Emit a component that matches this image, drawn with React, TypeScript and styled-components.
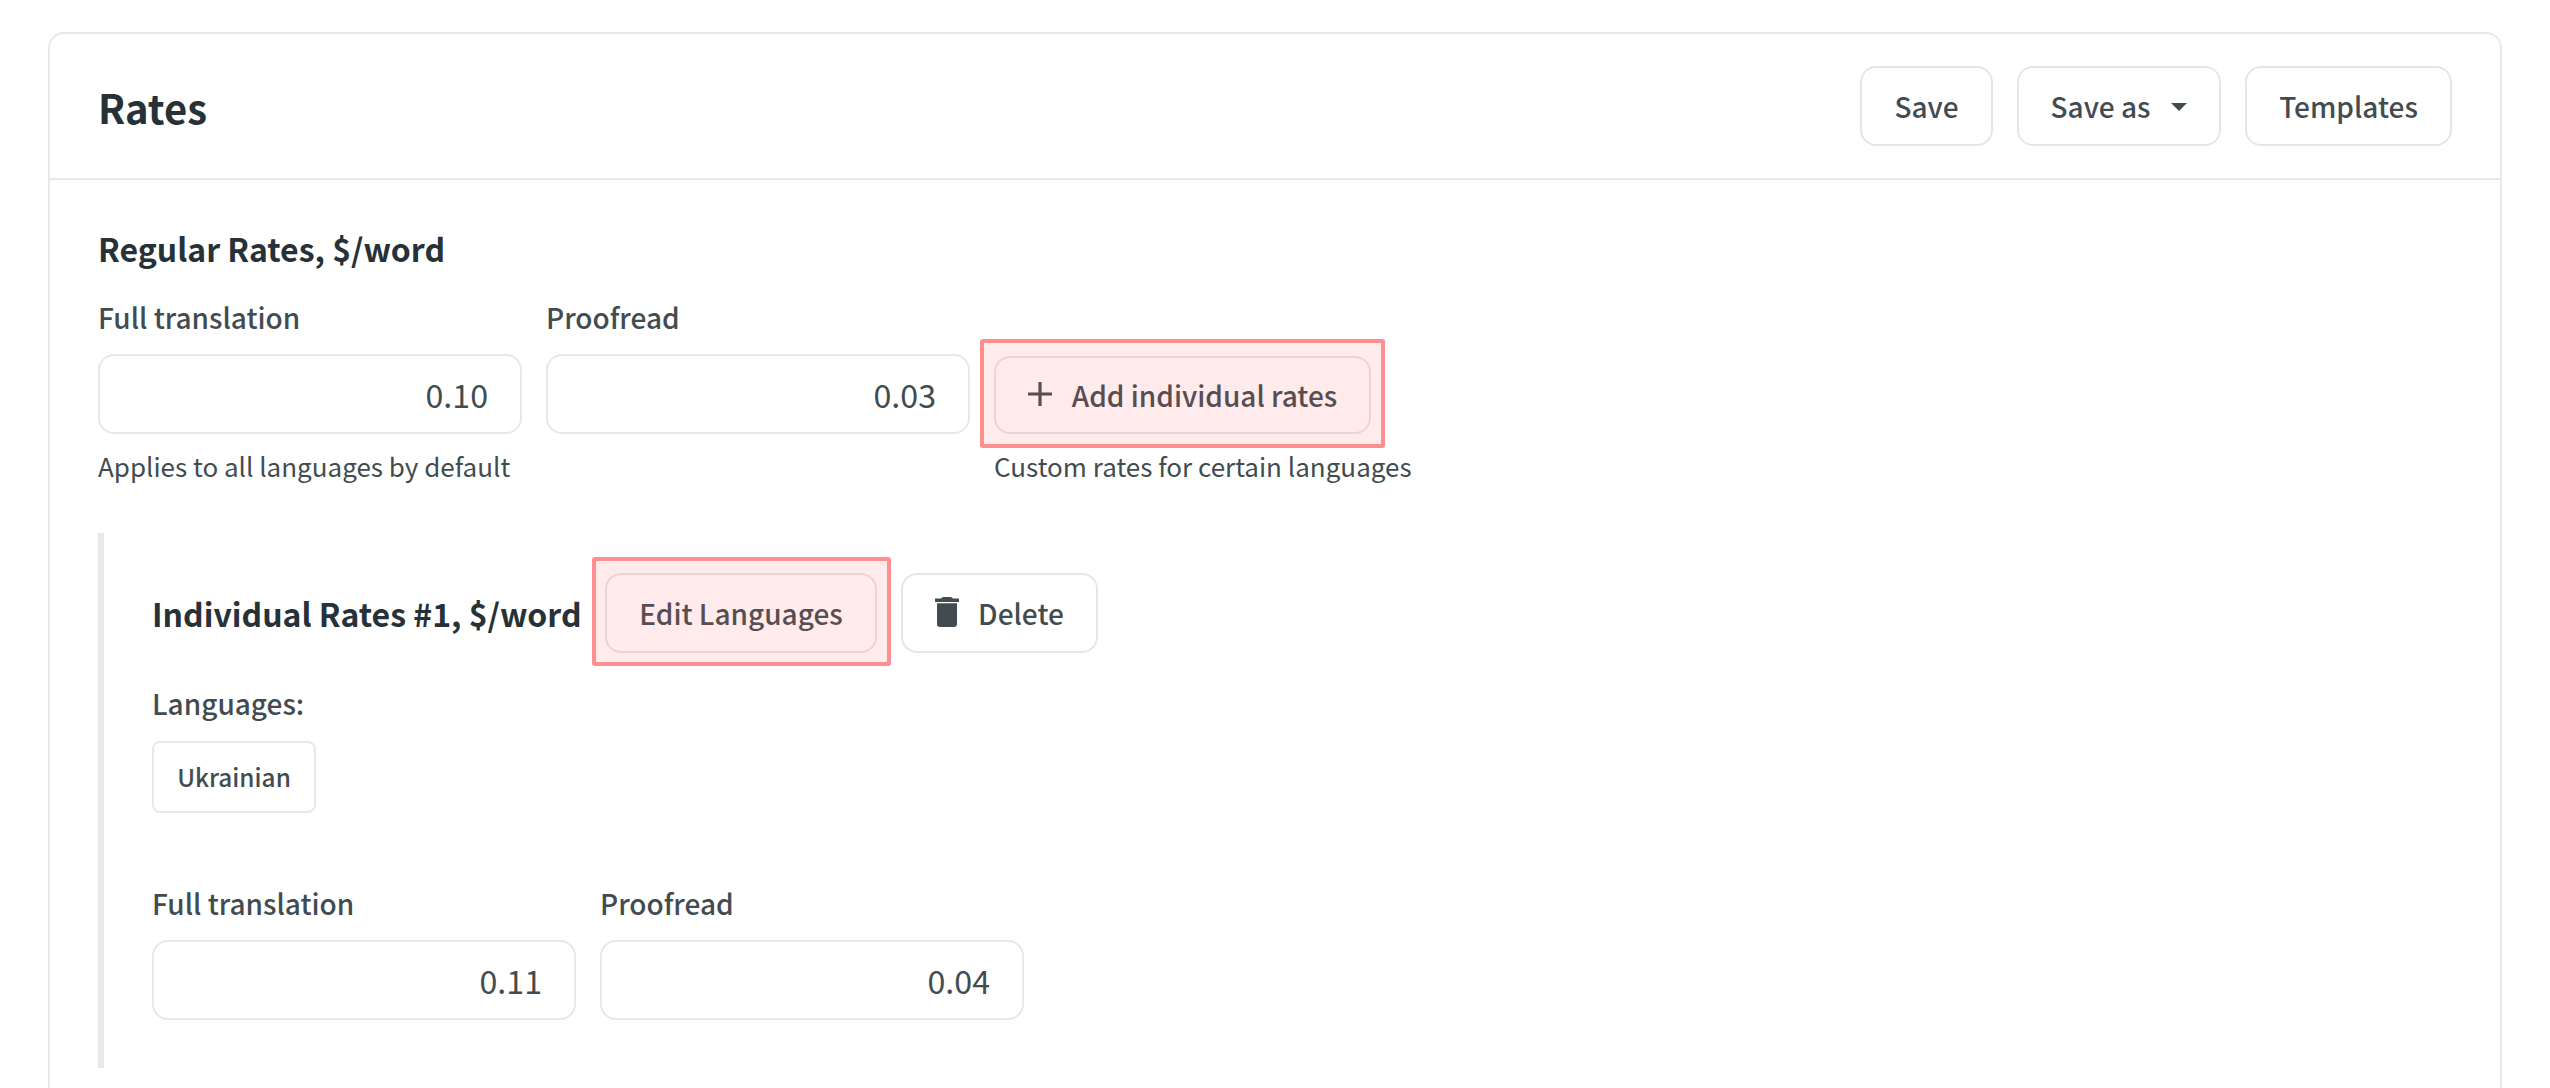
import React from "react";
import styled, { createGlobalStyle } from "styled-components";

const GlobalStyle = createGlobalStyle`
  *, *::before, *::after { box-sizing: border-box; }
  html, body { margin: 0; background: #fff; }
  body {
    height: 1088px;
    overflow: hidden;
    color: #424c50;
    font-family: "Noto Sans CJK SC", "Noto Sans", sans-serif;
  }
`;

const Page = styled.main`
  height: 1088px;
  padding: 32px 48px 0;
  overflow: hidden;
`;

const Card = styled.section`
  height: 1120px;
  border: 2px solid #e8e8e8;
  border-radius: 16px;
`;

const CardHeader = styled.header`
  display: flex;
  align-items: center;
  justify-content: space-between;
  height: 146px;
  padding: 0 48px;
  border-bottom: 2px solid #e8e8e8;
`;

const Title = styled.h1`
  margin: 2px 0 0;
  color: #263238;
  font-size: 40px;
  font-weight: 700;
  line-height: 60px;
`;

const Actions = styled.div`
  display: flex;
  gap: 24px;
`;

const Button = styled.button<{ $width: number; $height?: number; $gap?: number }>`
  display: flex;
  flex: none;
  align-items: center;
  justify-content: center;
  gap: ${(p) => p.$gap ?? 0}px;
  width: ${(p) => p.$width}px;
  height: ${(p) => p.$height ?? 80}px;
  padding: 0;
  border: 2px solid #e6e6e6;
  border-radius: 16px;
  background: #fff;
  color: #424c50;
  font-family: inherit;
  font-size: 28px;
  font-weight: 500;
  line-height: 48px;
  white-space: nowrap;

  svg { display: block; flex: none; fill: currentColor; }
`;

const CardBody = styled.div`
  padding: 42px 48px 0;
`;

const SectionTitle = styled.h2`
  margin: 0;
  color: #263238;
  font-size: 32px;
  font-weight: 700;
  line-height: 52px;
  white-space: nowrap;
`;

const Fields = styled.div<{ $top: number }>`
  display: flex;
  align-items: flex-start;
  gap: 24px;
  margin-top: ${(p) => p.$top}px;
`;

const Field = styled.label`
  display: flex;
  flex-direction: column;
  width: 424px;
`;

const Label = styled.span`
  font-size: 28px;
  font-weight: 500;
  line-height: 48px;
`;

const Input = styled.input`
  width: 100%;
  height: 80px;
  margin-top: 13px;
  padding: 0 32px;
  border: 2px solid #e8e8e8;
  border-radius: 16px;
  outline: none;
  background: #fff;
  color: #424c50;
  font-family: inherit;
  font-size: 32.2px;
  text-align: right;
`;

const Hint = styled.span`
  margin-top: 10px;
  font-size: 26px;
  line-height: 44px;
  white-space: nowrap;
`;

const AddColumn = styled.div`
  display: flex;
  flex-direction: column;
  align-items: flex-start;
  margin-top: 63px;
`;

const Highlighted = styled.div<{ $inset: string }>`
  position: relative;
  flex: none;

  &::after {
    content: "";
    position: absolute;
    inset: ${(p) => p.$inset};
    border: 4px solid #ff8f8f;
    border-radius: 3px;
    background: rgba(255, 83, 90, 0.116);
    background-clip: padding-box;
    pointer-events: none;
  }
`;

const Group = styled.div`
  height: 535px;
  margin-top: 45px;
  padding: 40px 0 0 48px;
  border-left: 6px solid #e8eae9;
`;

const GroupHeader = styled.div`
  display: flex;
  align-items: center;
  gap: 24px;
  height: 80px;
`;

const GroupTitle = styled(SectionTitle)`
  width: 429px;
`;

const Languages = styled.div`
  display: flex;
  flex-direction: column;
  align-items: flex-start;
  gap: 14px;
  margin-top: 26px;
`;

const Tag = styled.span`
  width: 164px;
  height: 72px;
  border: 2px solid #e8e8e8;
  border-radius: 8px;
  font-size: 24.4px;
  font-weight: 500;
  line-height: 68px;
  text-align: center;
`;

const CaretIcon = () => (
  <svg width="16" height="8" viewBox="0 0 16 8">
    <path d="M0 0h16L8 8z" />
  </svg>
);

const PlusIcon = () => (
  <svg width="24" height="24" viewBox="0 0 24 24">
    <path d="M10.4 0h3.2v10.4H24v3.2H13.6V24h-3.2V13.6H0v-3.2h10.4z" />
  </svg>
);

const TrashIcon = () => (
  <svg width="24" height="30" viewBox="0 0 24 30">
    <path d="M0 1.6h6Q7 0 8.500 0h7Q17 0 18 1.600h6v3.400H0zM2 6.300h20v20.700q0 3-3 3H5q-3 0-3-3z" />
  </svg>
);

const IconSlot = styled.span<{ $top?: number; $bottom?: number }>`
  display: flex;
  padding: ${(p) => p.$top ?? 0}px 0 ${(p) => p.$bottom ?? 0}px;
`;

function RateField({ label, value, hint }: { label: string; value: string; hint?: string }) {
  return (
    <Field>
      <Label>{label}</Label>
      <Input defaultValue={value} />
      {hint && <Hint>{hint}</Hint>}
    </Field>
  );
}

export default function App() {
  return (
    <Page>
      <GlobalStyle />
      <Card>
        <CardHeader>
          <Title>Rates</Title>
          <Actions>
            <Button $width={133}>Save</Button>
            <Button $width={204} $gap={21}>
              Save as
              <IconSlot $top={2}>
                <CaretIcon />
              </IconSlot>
            </Button>
            <Button $width={207}>Templates</Button>
          </Actions>
        </CardHeader>
        <CardBody>
          <SectionTitle>Regular Rates, $/word</SectionTitle>
          <Fields $top={19}>
            <RateField label="Full translation" value="0.10" hint="Applies to all languages by default" />
            <RateField label="Proofread" value="0.03" />
            <AddColumn>
              <Highlighted $inset="-17px -14px -14px -14px">
                <Button $width={377} $height={78} $gap={20}>
                  <IconSlot $bottom={2}>
                    <PlusIcon />
                  </IconSlot>
                  Add individual rates
                </Button>
              </Highlighted>
              <Hint>Custom rates for certain languages</Hint>
            </AddColumn>
          </Fields>
          <Group>
            <GroupHeader>
              <GroupTitle as="h3">Individual Rates #1, $/word</GroupTitle>
              <Highlighted $inset="-16px -14px -13px -13px">
                <Button $width={272}>Edit Languages</Button>
              </Highlighted>
              <Button $width={197} $gap={19}>
                <IconSlot $bottom={2}>
                  <TrashIcon />
                </IconSlot>
                Delete
              </Button>
            </GroupHeader>
            <Languages>
              <Label>Languages:</Label>
              <Tag>Ukrainian</Tag>
            </Languages>
            <Fields $top={66}>
              <RateField label="Full translation" value="0.11" />
              <RateField label="Proofread" value="0.04" />
            </Fields>
          </Group>
        </CardBody>
      </Card>
    </Page>
  );
}
